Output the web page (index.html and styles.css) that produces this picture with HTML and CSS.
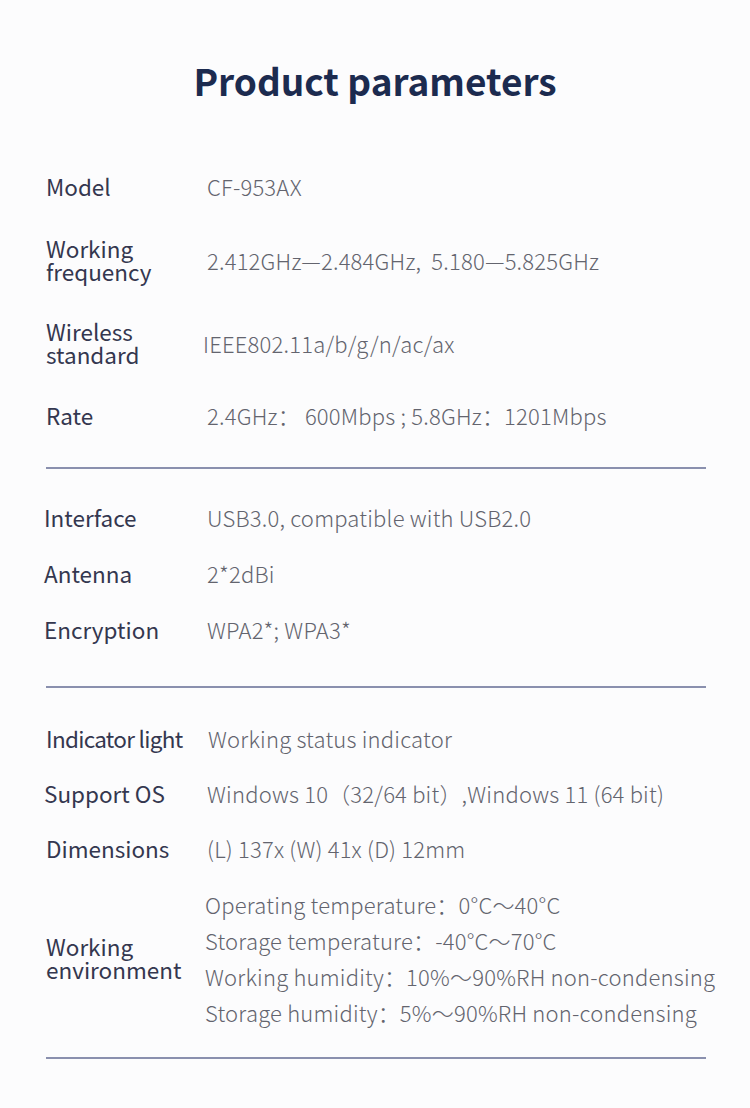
FILE: index.html
```html
<!DOCTYPE html>
<html lang="en">
<head>
<meta charset="utf-8">
<title>Product parameters</title>
<link rel="stylesheet" href="styles.css">
</head>
<body>
<main class="sheet">
  <h1 class="title">Product parameters</h1>

  <section class="spec spec-1">
    <div class="row"><div class="label">Model</div><div class="value">CF-953AX</div></div>
    <div class="row row-freq"><div class="label">Working<br>frequency</div><div class="value">2.412GHz—2.484GHz,&nbsp; 5.180—5.825GHz</div></div>
    <div class="row"><div class="label">Wireless<br>standard</div><div class="value shift">IEEE802.11a/b/g/n/ac/ax</div></div>
    <div class="row"><div class="label">Rate</div><div class="value">2.4GHz： 600Mbps ; 5.8GHz：1201Mbps</div></div>
  </section>

  <section class="spec spec-2">
    <div class="row"><div class="label">Interface</div><div class="value">USB3.0, compatible with USB2.0</div></div>
    <div class="row"><div class="label">Antenna</div><div class="value">2*2dBi</div></div>
    <div class="row"><div class="label">Encryption</div><div class="value">WPA2*; WPA3*</div></div>
  </section>

  <section class="spec spec-3">
    <div class="row"><div class="label tight">Indicator light</div><div class="value">Working status indicator</div></div>
    <div class="row"><div class="label nudge">Support OS</div><div class="value">Windows 10（32/64 bit）,Windows 11 (64 bit)</div></div>
    <div class="row"><div class="label">Dimensions</div><div class="value">(L) 137x (W) 41x (D) 12mm</div></div>
    <div class="row row-env"><div class="label">Working<br>environment</div>
      <div class="value list">
        <div>Operating temperature：0°C～40°C</div>
        <div>Storage temperature：-40°C～70°C</div>
        <div>Working humidity：10%～90%RH non-condensing</div>
        <div>Storage humidity：5%～90%RH non-condensing</div>
      </div>
    </div>
  </section>
</main>
</body>
</html>
```

FILE: styles.css
```css
html, body {
  margin: 0;
  padding: 0;
}
body {
  background: #fcfcfd;
  font-family: "Noto Sans CJK SC", "Noto Sans", sans-serif;
  width: 750px;
  height: 1108px;
  overflow: hidden;
}
.sheet {
  padding: 0 44px 0 46px;
}
.title {
  margin: 56px 0 0 -2px;
  font-size: 37px;
  line-height: 48px;
  font-weight: 700;
  color: #1c2b4f;
  text-align: center;
}
.spec {
  display: flex;
  flex-direction: column;
  border-bottom: 2px solid #8a90ae;
}
.spec-1 {
  padding-top: 70px;
  padding-bottom: 40px;
  gap: 37px;
}
.row-freq {
  margin-top: 2px;
}
.spec-2 {
  padding-top: 36px;
  padding-bottom: 45px;
  gap: 32px;
}
.spec-3 {
  padding-top: 38px;
  padding-bottom: 27px;
  gap: 31px;
}
.row {
  display: flex;
  align-items: center;
}
.label {
  width: 161px;
  flex: none;
  font-size: 22.5px;
  line-height: 23px;
  color: #34374f;
}
.value {
  font-family: "Noto Sans CJK SC", "Noto Sans", sans-serif;
  font-size: 22px;
  line-height: 24px;
  font-weight: 300;
  letter-spacing: 0.2px;
  color: #63646e;
  white-space: nowrap;
}
.shift {
  margin-left: -4px;
}
.spec-2 .label {
  margin-left: -2px;
  width: 163px;
}
.tight {
  letter-spacing: -0.7px;
  width: 162px;
}
.nudge {
  margin-left: -2px;
  width: 163px;
}
.row-env {
  margin-top: -5px;
}
.list {
  line-height: 36px;
  margin-left: -2px;
}
```
